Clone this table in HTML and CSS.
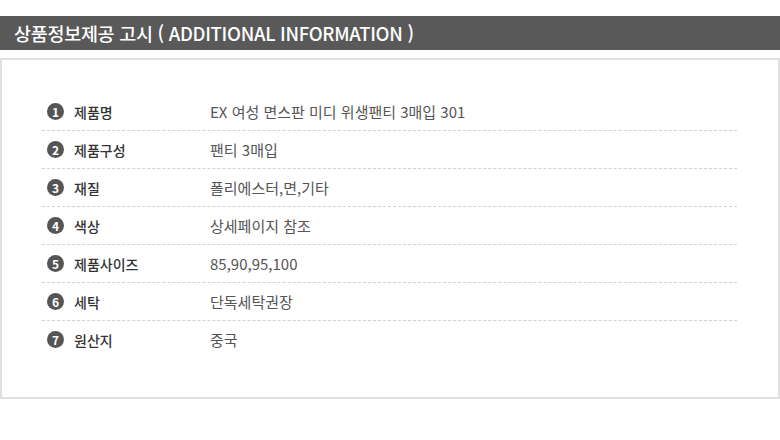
FILE: index.html
```html
<!DOCTYPE html>
<html lang="ko">
<head>
<meta charset="utf-8">
<link rel="stylesheet" href="styles.css">
</head>
<body>
<h2 class="title">상품정보제공 고시 ( ADDITIONAL INFORMATION )</h2>
<div class="box">
  <ul class="list">
    <li class="row"><span class="num">1</span><span class="label">제품명</span><span class="value">EX 여성 면스판 미디 위생팬티 3매입 301</span></li>
    <li class="row"><span class="num">2</span><span class="label">제품구성</span><span class="value">팬티 3매입</span></li>
    <li class="row"><span class="num">3</span><span class="label">재질</span><span class="value">폴리에스터,면,기타</span></li>
    <li class="row"><span class="num">4</span><span class="label">색상</span><span class="value">상세페이지 참조</span></li>
    <li class="row"><span class="num">5</span><span class="label">제품사이즈</span><span class="value">85,90,95,100</span></li>
    <li class="row"><span class="num">6</span><span class="label">세탁</span><span class="value">단독세탁권장</span></li>
    <li class="row"><span class="num">7</span><span class="label">원산지</span><span class="value">중국</span></li>
  </ul>
</div>
</body>
</html>
```

FILE: styles.css
```css
html, body {
  margin: 0;
  padding: 0;
  background: #fff;
}
body {
  font-family: "Noto Sans CJK KR", "Noto Sans", sans-serif;
  width: 780px;
}
.title {
  margin: 16px 0 0;
  height: 34px;
  line-height: 34px;
  background: #595959;
  color: #fff;
  font-size: 18.5px;
  font-weight: 500;
  padding: 0 0 0 14px;
  letter-spacing: -0.3px;
}
.box {
  margin-top: 8px;
  border: 2px solid #e0e0e0;
  height: 337px;
  box-sizing: content-box;
  padding: 0;
}
.list {
  list-style: none;
  margin: 0;
  padding: 33px 42px 0 40px;
  width: 695px;
}
.row {
  display: flex;
  align-items: center;
  height: 37px;
  border-bottom: 1px dashed #d0d0d0;
  font-size: 14px;
}
.row:last-child {
  border-bottom: none;
}
.num {
  width: 17px;
  height: 17px;
  border-radius: 50%;
  background: #555;
  color: #fff;
  font-size: 12px;
  font-weight: 700;
  line-height: 17px;
  text-align: center;
  margin-left: 5px;
  flex: none;
}
.label {
  width: 136px;
  margin-left: 10px;
  color: #333;
  font-weight: 500;
  font-size: 14px;
  flex: none;
}
.value {
  color: #555;
  font-size: 15px;
}
```
